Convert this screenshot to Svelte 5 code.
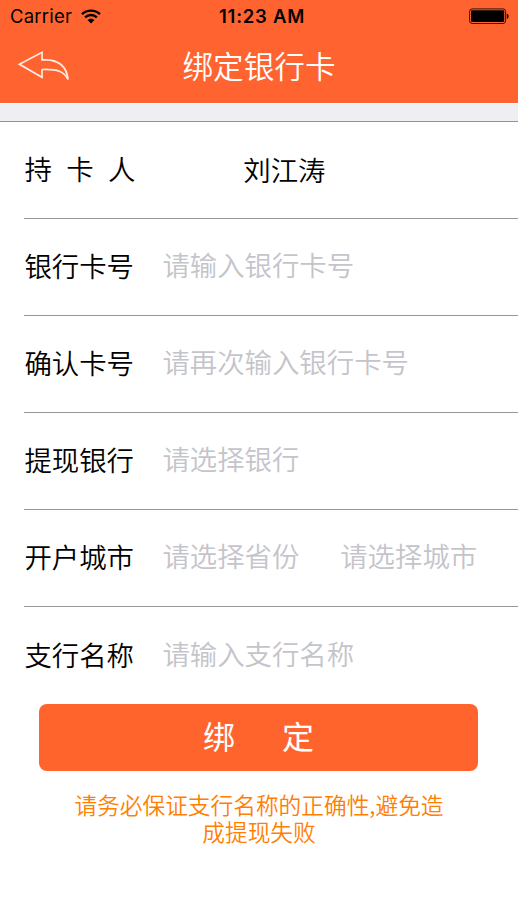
<script>
    let holder = '刘江涛';
    let form = {
        cardNo: '',
        confirmNo: '',
        bank: '',
        province: '',
        city: '',
        branch: ''
    };

    const rows = [
        { label: '银行卡号', fields: [{ key: 'cardNo', hint: '请输入银行卡号' }] },
        { label: '确认卡号', fields: [{ key: 'confirmNo', hint: '请再次输入银行卡号' }] },
        { label: '提现银行', fields: [{ key: 'bank', hint: '请选择银行' }] },
        {
            label: '开户城市',
            fields: [
                { key: 'province', hint: '请选择省份' },
                { key: 'city', hint: '请选择城市' }
            ]
        },
        { label: '支行名称', fields: [{ key: 'branch', hint: '请输入支行名称' }] }
    ];
</script>

<div class="page">
    <header>
        <div class="status-bar">
            <div class="carrier">
                <span>Carrier</span>
                <svg class="wifi" width="20" height="15" viewBox="0 0 20 15">
                    <path d="M1 5.2a13 13 0 0 1 18 0" />
                    <path d="M4.1 8.4a8.5 8.5 0 0 1 11.8 0" />
                    <path class="dot" d="M6.5 11a5.2 5.2 0 0 1 7 0L10 14.4z" />
                </svg>
            </div>
            <span class="time">11:23 AM</span>
            <svg class="battery" width="40" height="16" viewBox="0 0 40 16">
                <rect class="shell" x="0.6" y="0.9" width="36" height="14.6" rx="2.6" />
                <rect x="2" y="2.3" width="33.2" height="11.8" rx="1" />
                <path d="M37.8 5.5c2.3.6 2.3 4.8 0 5.4z" />
            </svg>
        </div>
        <nav>
            <button class="back" aria-label="返回">
                <svg width="52" height="32" viewBox="0 0 52 32">
                    <path d="M1.5 14.3L24 2.3V9.9C39 8.9 48.5 14 50 29.5C46.5 21.5 39 18.8 24 19.5V27.3Z" />
                </svg>
            </button>
            <h1>绑定银行卡</h1>
        </nav>
    </header>

    <div class="spacer"></div>

    <form on:submit|preventDefault>
        <div class="row">
            <span class="label holder-label">持卡人</span>
            <span class="holder">{holder}</span>
        </div>
        {#each rows as row}
            <div class="row">
                <span class="label">{row.label}</span>
                {#each row.fields as field}
                    <input bind:value={form[field.key]} placeholder={field.hint} />
                {/each}
            </div>
        {/each}

        <button class="submit" type="submit"><span>绑</span><span>定</span></button>
    </form>

    <p class="notice">请务必保证支行名称的正确性,避免造成提现失败</p>
</div>

<style>
    :global(body) {
        background: #fff;
    }

    .page {
        height: 920px;
        overflow: hidden;
        background: #fff;
        color: #000;
        font-family: 'Noto Sans CJK SC', sans-serif;
        font-weight: 350;
    }

    button {
        padding: 0;
        border: none;
        background: none;
        font: inherit;
    }

    header {
        height: 103px;
        background: #ff6430;
    }

    .status-bar {
        display: grid;
        grid-template-columns: 1fr auto 1fr;
        align-items: center;
        height: 32px;
        padding: 0 9px 0 10px;
        font-family: Inter, sans-serif;
        font-size: 18.5px;
        font-weight: 400;
    }

    .carrier {
        display: flex;
        align-items: center;
        gap: 9px;
        letter-spacing: 0.2px;
    }

    .time {
        padding-left: 5px;
        font-weight: 600;
        letter-spacing: 0.75px;
    }

    .wifi {
        fill: none;
        stroke: #000;
        stroke-width: 2.4;
    }

    .wifi .dot {
        fill: #000;
        stroke: none;
    }

    .battery {
        justify-self: end;
    }

    .battery .shell {
        fill: none;
        stroke: #000;
        stroke-width: 0.8;
    }

    nav {
        display: grid;
        grid-template-columns: 80px 1fr 80px;
        align-items: center;
        height: 67px;
    }

    .back {
        height: 32px;
        padding-left: 18px;
        text-align: left;
    }

    .back svg {
        display: block;
        fill: none;
        stroke: #ffece4;
        stroke-width: 1.7;
    }

    h1 {
        margin: 0;
        padding-bottom: 1px;
        color: #fff;
        font-size: 30.6px;
        font-weight: 350;
        line-height: 44px;
        text-align: center;
    }

    .spacer {
        height: 17px;
        margin-top: 1px;
        background: #eeeef3;
        border-bottom: 1px solid #929296;
    }

    .row {
        display: flex;
        align-items: center;
        box-sizing: border-box;
        height: 97.1px;
        margin-left: 24px;
        padding-bottom: 4px;
        border-bottom: 1px solid #97979a;
        font-size: 27.4px;
    }

    .row:nth-of-type(6) {
        height: 97px;
        padding-bottom: 3px;
        border-bottom-color: transparent;
    }

    .label {
        box-sizing: border-box;
        width: 138.4px;
        padding-left: 0.4px;
        flex-shrink: 0;
    }

    .holder-label {
        letter-spacing: 14.4px;
    }

    .holder {
        width: 244px;
        padding-top: 1px;
        text-align: center;
    }

    input {
        flex: 1;
        min-width: 0;
        height: 60px;
        padding: 0 0 2px;
        border: none;
        outline: none;
        background: none;
        color: #000;
        font: inherit;
    }

    input::placeholder {
        color: #c4c4ca;
        opacity: 1;
    }

    .submit {
        display: flex;
        align-items: center;
        justify-content: center;
        box-sizing: border-box;
        gap: 47px;
        width: 439px;
        height: 67px;
        margin: 0 0 0 39px;
        padding-bottom: 5px;
        border-radius: 8px;
        background: #ff642c;
        color: #fff;
        font-size: 32px;
        font-weight: 400;
    }

    .notice {
        width: 380px;
        margin: 20px auto 0;
        color: #ff8000;
        font-size: 22.7px;
        line-height: 27px;
        text-align: center;
    }
</style>
